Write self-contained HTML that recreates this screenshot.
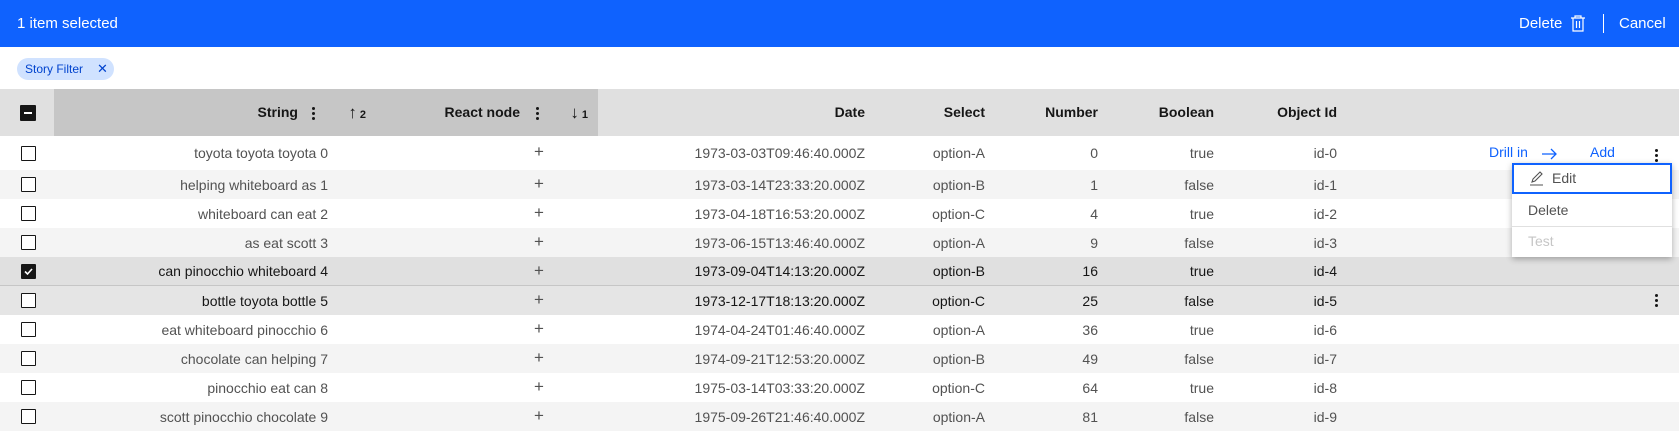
<!DOCTYPE html>
<html><head><meta charset="utf-8"><style>
*{box-sizing:border-box;margin:0;padding:0}
body{width:1679px;height:432px;overflow:hidden;background:#fff;font-family:"Liberation Sans",sans-serif;position:relative;color:#525252}
.abs{position:absolute}
.bar{left:0;top:0;width:1679px;height:47px;background:#0f62fe;color:#fff;font-size:15px}
.tag{left:17px;top:58px;width:97px;height:22px;border-radius:11px;background:#d0e2ff;color:#0043ce;font-size:12px;line-height:22px;padding-left:8px}
.hdr{left:0;top:89px;width:1679px;height:47px;background:#e0e0e0}
.sorted{left:54px;top:89px;width:544px;height:47px;background:#c6c6c6}
.h{font-weight:bold;color:#161616;font-size:14px;top:89px;line-height:47px;text-align:right}
.row{left:0;width:1679px}
.c{position:absolute;top:0;height:100%;display:flex;align-items:center;justify-content:flex-end;font-size:14px;white-space:nowrap}
.cb{position:absolute;left:21px;width:15px;height:15px;border:1px solid #161616;background:#fff;border-radius:1px}
.plus{position:absolute;left:534px;font-size:17px;color:#525252}
.kebab{display:inline-block;width:3px}
.kebab i{display:block;width:3px;height:3px;background:#161616;border-radius:50%;margin:2px 0}
</style></head><body>
<div class="abs bar">
 <div class="abs" style="left:17px;top:0;line-height:47px">1 item selected</div>
 <div class="abs" style="left:1519px;top:0;line-height:47px">Delete</div>
 <svg class="abs" style="left:1570px;top:15px" width="16" height="17" viewBox="0 0 16 17" fill="none" stroke="#fff" stroke-width="1.2"><path d="M1 3h14M5 3V1h6v2M3 3v13h10V3M6.5 6v7M9.5 6v7"/></svg>
 <div class="abs" style="left:1603px;top:14px;width:1px;height:19px;background:#fff"></div>
 <div class="abs" style="left:1619px;top:0;line-height:47px">Cancel</div>
</div>
<div class="abs tag">Story Filter <span style="position:absolute;left:80px;font-size:13px">✕</span></div>
<div class="abs hdr"></div>
<div class="abs sorted"></div>
<div class="abs" style="left:20px;top:105px;width:16px;height:16px;background:#161616;border-radius:1px"><div style="position:absolute;left:4px;top:7px;width:8px;height:2px;background:#fff"></div></div>
<div class="abs h" style="left:200px;width:98px">String</div>
<div class="abs" style="left:312px;top:105px"><span class="kebab"><i></i><i></i><i></i></span></div>
<div class="abs h" style="left:336px;width:30px;font-weight:normal;font-size:17px">↑<span style="font-size:11px;font-weight:bold"> 2</span></div>
<div class="abs h" style="left:400px;width:120px">React node</div>
<div class="abs" style="left:536px;top:105px"><span class="kebab"><i></i><i></i><i></i></span></div>
<div class="abs h" style="left:558px;width:30px;font-weight:normal;font-size:17px">↓<span style="font-size:11px;font-weight:bold"> 1</span></div>
<div class="abs h" style="left:765px;width:100px">Date</div>
<div class="abs h" style="left:885px;width:100px">Select</div>
<div class="abs h" style="left:998px;width:100px">Number</div>
<div class="abs h" style="left:1114px;width:100px">Boolean</div>
<div class="abs h" style="left:1237px;width:100px">Object Id</div>

<div id="rows"></div>
<script>
(function(){
var d=[["toyota toyota toyota 0","1973-03-03T09:46:40.000Z","option-A",0,"true"],
["helping whiteboard as 1","1973-03-14T23:33:20.000Z","option-B",1,"false"],
["whiteboard can eat 2","1973-04-18T16:53:20.000Z","option-C",4,"true"],
["as eat scott 3","1973-06-15T13:46:40.000Z","option-A",9,"false"],
["can pinocchio whiteboard 4","1973-09-04T14:13:20.000Z","option-B",16,"true"],
["bottle toyota bottle 5","1973-12-17T18:13:20.000Z","option-C",25,"false"],
["eat whiteboard pinocchio 6","1974-04-24T01:46:40.000Z","option-A",36,"true"],
["chocolate can helping 7","1974-09-21T12:53:20.000Z","option-B",49,"false"],
["pinocchio eat can 8","1975-03-14T03:33:20.000Z","option-C",64,"true"],
["scott pinocchio chocolate 9","1975-09-26T21:46:40.000Z","option-A",81,"false"]];
var h="",y=136;
d.forEach(function(r,i){var ht=i==0?34:29;
var bg=i%2?"#f4f4f4":"#fff",col="#525252";
if(i==4){bg="#e0e0e0";col="#161616"}
if(i==5){bg="#e5e5e5";col="#161616"}
h+='<div class="abs row" style="top:'+y+'px;height:'+ht+'px;background:'+bg+';color:'+col+';'+(i==4?'border-bottom:1px solid #c6c6c6;':'')+'">'+
'<div class="cb" style="top:'+((ht-15)/2)+'px;'+(i==4?'background:#161616':'')+'">'+(i==4?'<svg width="13" height="13" viewBox="0 0 13 13" style="position:absolute;left:0;top:0"><path d="M3 6.5l2.5 2.5 4.5-5" stroke="#fff" stroke-width="1.6" fill="none"/></svg>':'')+'</div>'+
'<div class="c" style="left:100px;width:228px">'+r[0]+'</div>'+
'<div class="plus" style="top:'+(ht/2-11)+'px">+</div>'+
'<div class="c" style="left:600px;width:265px">'+r[1]+'</div>'+
'<div class="c" style="left:885px;width:100px">'+r[2]+'</div>'+
'<div class="c" style="left:998px;width:100px">'+r[3]+'</div>'+
'<div class="c" style="left:1114px;width:100px">'+r[4]+'</div>'+
'<div class="c" style="left:1237px;width:100px">id-'+i+'</div>'+
(i==5?'<div style="position:absolute;left:1655px;top:6px"><span class="kebab"><i></i><i></i><i></i></span></div>':'')+
'</div>';y+=ht;});
document.getElementById("rows").innerHTML=h;
})();
</script>
<div class="abs" style="left:1489px;top:144px;color:#0f62fe;font-size:14px">Drill in</div>
<svg class="abs" style="left:1541px;top:148px" width="16" height="12" viewBox="0 0 16 12" fill="none" stroke="#0f62fe" stroke-width="1.3"><path d="M1 6h14M10 1l5 5-5 5"/></svg>
<div class="abs" style="left:1590px;top:144px;color:#0f62fe;font-size:14px">Add</div>
<div class="abs" style="left:1640px;top:146px;width:32px;height:18px;background:#fff"><div style="position:absolute;left:15px;top:1px"><span class="kebab"><i></i><i></i><i></i></span></div></div>
<div class="abs" style="left:1512px;top:163px;width:160px;height:94px;background:#fff;box-shadow:0 2px 6px rgba(0,0,0,.3)">
 <div class="abs" style="left:0;top:0;width:160px;height:31px;border:2px solid #0f62fe"></div>
 <svg class="abs" style="left:17px;top:7px" width="15" height="16" viewBox="0 0 15 16" fill="none" stroke="#525252" stroke-width="1.1"><path d="M1 15h13M3 12l1-3 7-7 2 2-7 7z"/></svg>
 <div class="abs" style="left:40px;top:0;line-height:31px;font-size:14px;color:#525252">Edit</div>
 <div class="abs" style="left:16px;top:31px;line-height:32px;font-size:14px;color:#525252">Delete</div>
 <div class="abs" style="left:0;top:63px;width:160px;height:1px;background:#e0e0e0"></div>
 <div class="abs" style="left:16px;top:63px;line-height:31px;font-size:14px;color:#c6c6c6">Test</div>
</div>
</body></html>
